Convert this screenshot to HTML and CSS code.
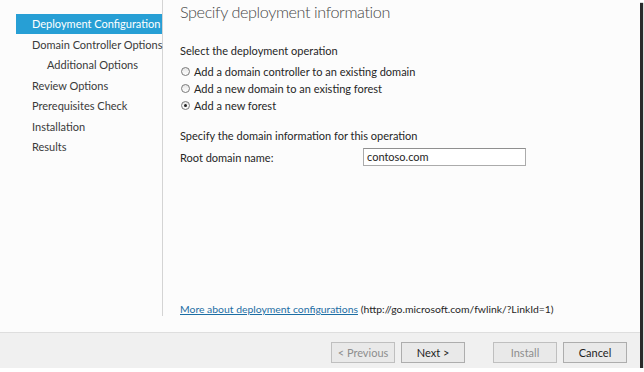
FILE: index.html
```html
<!DOCTYPE html>
<html>
<head>
<meta charset="utf-8">
<link rel="stylesheet" href="styles.css">
</head>
<body>
<div class="window">
  <div class="main">
    <nav class="sidebar">
      <div class="nav-item selected">Deployment Configuration</div>
      <div class="nav-item">Domain Controller Options</div>
      <div class="nav-item sub">Additional Options</div>
      <div class="nav-item">Review Options</div>
      <div class="nav-item">Prerequisites Check</div>
      <div class="nav-item">Installation</div>
      <div class="nav-item">Results</div>
    </nav>
    <section class="content">
      <h1 class="title">Specify deployment information</h1>
      <div class="label section-label">Select the deployment operation</div>
      <div class="radios">
        <label class="radio"><span class="dot"></span>Add a domain controller to an existing domain</label>
        <label class="radio"><span class="dot"></span>Add a new domain to an existing forest</label>
        <label class="radio"><span class="dot checked"></span>Add a new forest</label>
      </div>
      <div class="label section-label2">Specify the domain information for this operation</div>
      <div class="field">
        <span class="field-label">Root domain name:</span>
        <span class="input">contoso.com</span>
      </div>
      <div class="spacer"></div>
      <div class="more"><a class="link">More about deployment configurations</a> (http://go.microsoft.com/fwlink/?LinkId=1)</div>
    </section>
  </div>
  <div class="footer">
    <span class="btn disabled">&lt; Previous</span>
    <span class="btn">Next &gt;</span>
    <span class="btn disabled gap">Install</span>
    <span class="btn">Cancel</span>
  </div>
</div>
</body>
</html>
```
FILE: styles.css
```css
html, body {
  margin: 0;
  padding: 0;
  background: #ffffff;
}
body {
  font-family: Lato, "Noto Sans", sans-serif;
  font-size: 11px;
  color: #262626;
}
.window {
  width: 640px;
  height: 368px;
  background: #fcfcfc;
  display: flex;
  flex-direction: column;
  box-shadow: 3px 3px 1px #2a2a2a;
}
.main {
  height: 332px;
  display: flex;
  align-items: flex-start;
  border-bottom: 1px solid #dedede;
}
.sidebar {
  width: 146px;
  height: 302px;
  padding: 14px 0 0 16px;
  border-right: 1px solid #d4d4d4;
  display: flex;
  flex-direction: column;
}
.nav-item {
  height: 20.5px;
  line-height: 20px;
  padding-left: 16px;
  color: #3a3a3a;
  white-space: nowrap;
}
.nav-item.sub {
  padding-left: 31px;
}
.nav-item.selected {
  background: #279fd5;
  color: #ffffff;
  height: 20px;
  margin-bottom: 0.5px;
}
.content {
  flex: 1;
  height: 332px;
  padding-left: 17px;
  display: flex;
  flex-direction: column;
  box-sizing: border-box;
}
.title {
  margin: 0;
  font-family: Lato, sans-serif;
  font-weight: 300;
  font-size: 16.2px;
  letter-spacing: -0.4px;
  line-height: 24px;
  color: #474747;
}
.section-label {
  margin-top: 19px;
  line-height: 16px;
}
.radios {
  margin-top: 4px;
  display: flex;
  flex-direction: column;
}
.radio {
  display: flex;
  align-items: center;
  height: 17px;
}
.dot {
  width: 7px;
  height: 7px;
  border: 1px solid #7a7a7a;
  border-radius: 50%;
  background: linear-gradient(#e6e6e6, #ffffff);
  margin-right: 4px;
  margin-left: 1px;
  box-sizing: content-box;
  position: relative;
}
.dot.checked::after {
  content: "";
  position: absolute;
  left: 2px;
  top: 2px;
  width: 3px;
  height: 3px;
  border-radius: 50%;
  background: #222;
}
.section-label2 {
  margin-top: 14px;
  line-height: 16px;
}
.field {
  display: flex;
  align-items: center;
  margin-top: 4px;
}
.field-label {
  width: 183px;
}
.input {
  width: 158px;
  height: 16px;
  line-height: 16px;
  border: 1px solid #ababab;
  border-top-color: #8f8f8f;
  background: #fff;
  padding-left: 3px;
}
.spacer {
  flex: 1;
}
.more {
  margin-bottom: 15px;
  line-height: 16px;
  font-size: 10.4px;
}
.link {
  color: #1c6ea4;
  text-decoration: underline;
}
.footer {
  flex: 1;
  background: #f0f0f0;
  display: flex;
  justify-content: flex-end;
  align-items: flex-start;
  padding: 9px 13px 0 0;
  gap: 6px;
}
.btn {
  width: 62px;
  height: 19px;
  line-height: 19px;
  text-align: center;
  border: 1px solid #adadad;
  background: #e9e9e9;
  color: #1e1e1e;
}
.btn.disabled {
  color: #8d8d8d;
  border-color: #bfbfbf;
}
.btn.gap {
  margin-left: 22px;
}
```
